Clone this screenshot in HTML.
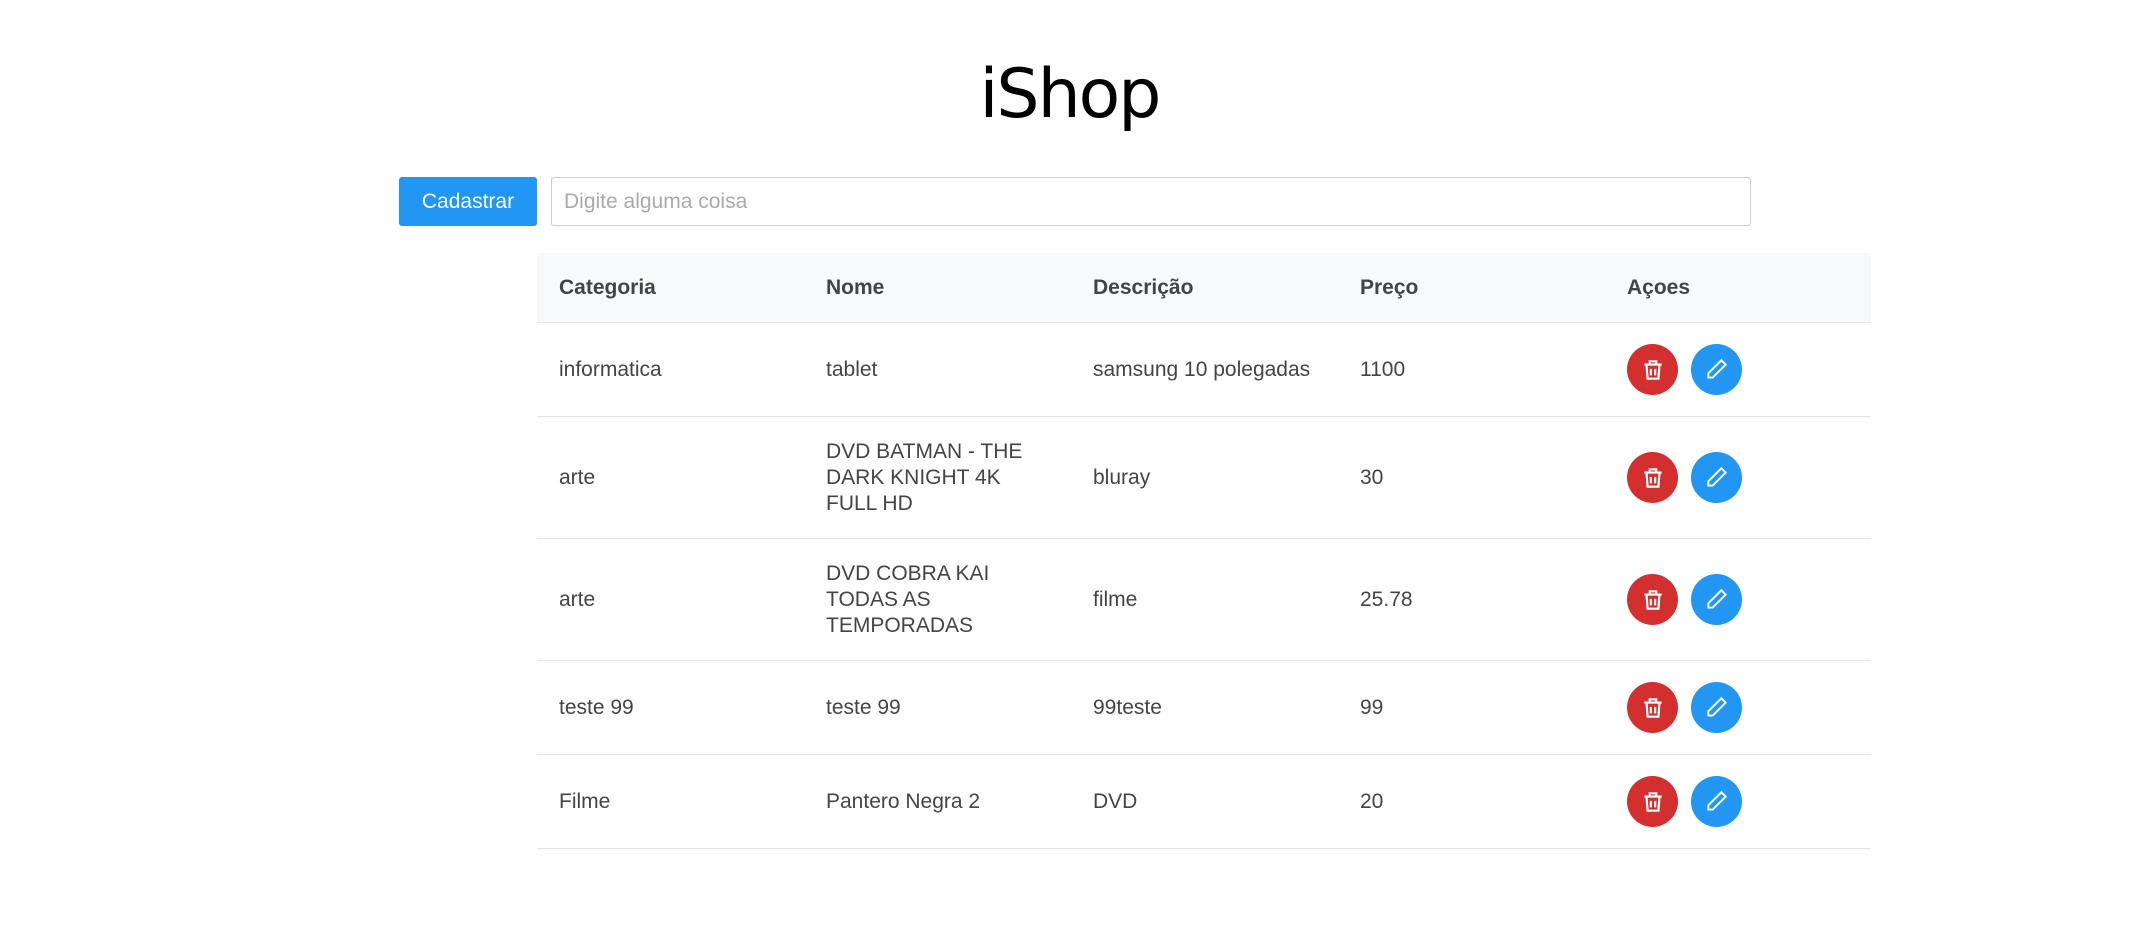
<!DOCTYPE html>
<html><head><meta charset="utf-8"><style>
body{margin:0;background:#fff;font-family:"Liberation Sans",sans-serif;width:2129px;height:929px;position:relative;overflow:hidden}
h1{position:absolute;left:10px;right:0;top:50px;margin:0;text-align:center;font-weight:400;font-size:68px;line-height:90px;color:#000;font-family:"DejaVu Sans","Liberation Sans",sans-serif;letter-spacing:-2px}
.btn{position:absolute;left:399px;top:177px;width:138px;height:49px;background:#2196f3;color:#fff;border-radius:3px;font-size:21px;line-height:49px;text-align:center}
.inp{position:absolute;left:551px;top:177px;width:1186px;height:47px;border:1px solid #ccc;border-radius:3px;color:#aaa;font-size:21px;line-height:47px;padding-left:12px}
table{position:absolute;left:537px;top:253px;width:1334px;border-collapse:collapse;table-layout:fixed;font-size:21px;color:#444}
td,th{text-align:left;padding:0 43px 0 22px;border-bottom:1px solid #e5e5e5;line-height:26px;vertical-align:middle}
th{background:#f8f9fa;height:69px;color:#444;font-weight:700}
.c{display:inline-block;width:51px;height:51px;border-radius:50%;vertical-align:middle;margin-right:13px;position:relative}
.r{background:#d32f2f}.b{background:#2196f3}
.c svg{position:absolute;left:13px;top:13px}
</style></head><body>
<h1>iShop</h1>
<div class="btn">Cadastrar</div>
<div class="inp">Digite alguma coisa</div>
<table>
<colgroup><col style="width:267px"><col style="width:267px"><col style="width:267px"><col style="width:267px"><col style="width:266px"></colgroup>
<tr><th>Categoria</th><th>Nome</th><th>Descrição</th><th>Preço</th><th style="padding-right:0">Açoes</th></tr>
<tr style="height:94px"><td>informatica</td><td>tablet</td><td style="padding-right:0">samsung 10 polegadas</td><td>1100</td><td>ACT</td></tr>
<tr style="height:122px"><td>arte</td><td>DVD BATMAN - THE DARK KNIGHT 4K FULL HD</td><td>bluray</td><td>30</td><td>ACT</td></tr>
<tr style="height:122px"><td>arte</td><td>DVD COBRA KAI TODAS AS TEMPORADAS</td><td>filme</td><td>25.78</td><td>ACT</td></tr>
<tr style="height:94px"><td>teste 99</td><td>teste 99</td><td>99teste</td><td>99</td><td>ACT</td></tr>
<tr style="height:94px"><td>Filme</td><td>Pantero Negra 2</td><td>DVD</td><td>20</td><td>ACT</td></tr>
</table>
<script>
var a='<span class="c r"><svg width="26" height="26" viewBox="0 0 24 24" fill="none" stroke="#fff" stroke-width="2"><path d="M4 7h16M9 7V4h6v3M6 7l1 13h10l1-13M10 11v6M14 11v6"/></svg></span><span class="c b"><svg width="26" height="26" viewBox="0 0 24 24" fill="none" stroke="#fff" stroke-width="1.8"><path d="M16 3l4 4L8 19H4v-4z"/></svg></span>';
document.querySelectorAll('td').forEach(function(t){if(t.textContent=='ACT'){t.innerHTML=a;t.style.paddingRight='0';}});
</script>
</body></html>
